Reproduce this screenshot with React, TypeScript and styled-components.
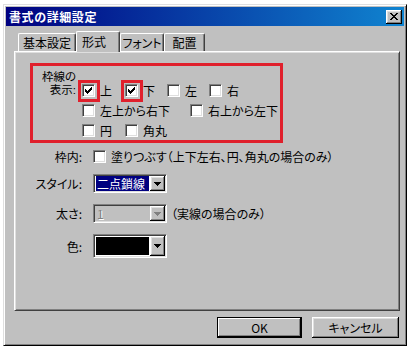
import React from "react";
import styled, { createGlobalStyle, css } from "styled-components";

const FACE = "#c0c0c0";
const RED = "#e0202c";

const GlobalStyle = createGlobalStyle`
  html, body { margin: 0; padding: 0; background: #fff; }
  body {
    font-family: "Noto Sans CJK JP", "Noto Sans", sans-serif;
    font-size: 12px;
    font-feature-settings: "palt";
    color: #000;
  }
  * { box-sizing: border-box; }
`;

const raised = css`
  box-shadow: inset -1px -1px #000, inset 1px 1px #fff, inset -2px -2px #808080,
    inset 2px 2px #dfdfdf;
`;

const sunken = css`
  border: 1px solid;
  border-color: #808080 #fff #fff #808080;
  box-shadow: inset 1px 1px #404040, inset -1px -1px #dfdfdf;
`;

const Page = styled.div`
  padding: 4px 0 0 3px;
`;

const Window = styled.div`
  width: 404px;
  height: 342px;
  background: ${FACE};
  border: 1px solid;
  border-color: #dfdfdf #000 #000 #dfdfdf;
  box-shadow: inset 1px 1px #fff, inset -1px -1px #808080;
  padding: 2px;
  display: flex;
  flex-direction: column;
`;

const TitleBar = styled.div`
  height: 19px;
  background: linear-gradient(to right, #000080, #1084d0);
  display: flex;
  align-items: center;
  justify-content: space-between;
  padding: 0 2px 0 3px;
`;

const TitleText = styled.span`
  color: #fff;
  font-weight: bold;
  font-size: 12px;
  letter-spacing: 0.6px;
  line-height: 19px;
`;

const CloseButton = styled.div`
  width: 16px;
  height: 14px;
  background: ${FACE};
  ${raised};
  display: flex;
  align-items: center;
  justify-content: center;
`;

const TabStrip = styled.div`
  margin-top: 5px;
  height: 20px;
  padding-left: 12px;
  display: flex;
  align-items: flex-end;
`;

const Tab = styled.div<{ $active?: boolean; $w: number }>`
  position: relative;
  z-index: ${(p) => (p.$active ? 2 : 0)};
  width: ${(p) => p.$w}px;
  height: ${(p) => (p.$active ? 21 : 18)}px;
  margin-bottom: ${(p) => (p.$active ? -1 : 0)}px;
  background: ${FACE};
  border-top: 1px solid #fff;
  border-left: 1px solid #fff;
  border-right: 1px solid #404040;
  border-top-left-radius: 2px;
  border-top-right-radius: 2px;
  box-shadow: inset -1px 0 #808080;
  display: flex;
  align-items: center;
  justify-content: ${(p) => (p.$active ? "flex-start" : "center")};
  padding-left: ${(p) => (p.$active ? 5 : 0)}px;
  padding-bottom: ${(p) => (p.$active ? 2 : 0)}px;
  font-size: 12px;
  white-space: nowrap;
`;

const Panel = styled.div`
  margin-left: 8px;
  width: 386px;
  height: 260px;
  border: 1px solid;
  border-color: #fff #404040 #404040 #fff;
  box-shadow: inset 1px 1px #dfdfdf, inset -1px -1px #808080;
  padding: 1px;
  display: flex;
  flex-direction: column;
`;

const BorderGroup = styled.div`
  margin: 10px 0 0 14px;
  width: 253px;
  height: 80px;
  border: 3px solid ${RED};
  padding: 5px 0 0 7px;
  display: flex;
`;

const GroupLabel = styled.div`
  width: 36px;
  white-space: nowrap;
  display: flex;
  flex-direction: column;
  align-items: flex-end;
`;

const GroupLabelLine = styled.span`
  display: block;
  height: 13px;
  line-height: 13px;
  font-family: "Liberation Sans", "Noto Sans CJK JP", sans-serif;
  font-size: 11.5px;
`;

const OptionRows = styled.div`
  margin-left: 6px;
  padding-top: 9px;
  display: flex;
  flex-direction: column;
`;

const OptionRow = styled.div`
  height: 20px;
  display: flex;
  align-items: center;
`;

const Option = styled.label<{ $w?: number }>`
  display: inline-flex;
  align-items: center;
  gap: 5px;
  width: ${(p) => (p.$w ? `${p.$w}px` : "auto")};
  white-space: nowrap;
  line-height: 13px;
`;

const CheckBox = styled.span<{ $marked?: boolean }>`
  position: relative;
  flex: none;
  width: 13px;
  height: 13px;
  background: #fff;
  ${sunken};
  display: flex;
  align-items: center;
  justify-content: center;
  ${(p) =>
    p.$marked &&
    css`
      &::after {
        content: "";
        position: absolute;
        left: -5px;
        top: -5px;
        width: 22px;
        height: 22px;
        border: 3px solid ${RED};
        box-sizing: border-box;
      }
    `}
`;

const Fields = styled.div`
  margin-top: 7px;
  display: grid;
  grid-template-columns: 66px auto;
  column-gap: 11px;
  row-gap: 11px;
  align-items: center;
  justify-items: start;
`;

const FieldLabel = styled.div`
  justify-self: end;
  white-space: nowrap;
  line-height: 13px;
`;

const FieldLine = styled.div`
  display: flex;
  align-items: center;
  gap: 4px;
  white-space: nowrap;
`;

const Combo = styled.div<{ $h: number; $disabled?: boolean }>`
  width: 74px;
  height: ${(p) => p.$h}px;
  background: ${(p) => (p.$disabled ? FACE : "#fff")};
  ${sunken};
  padding: 1px;
  display: flex;
`;

const ComboValue = styled.div<{ $kind: "selected" | "disabled" | "swatch" }>`
  flex: 1;
  margin: 0 1px 0 0;
  display: flex;
  align-items: center;
  padding-left: 2px;
  line-height: 13px;
  ${(p) =>
    p.$kind === "selected" &&
    css`
      background: #000080;
      color: #fff;
      margin: 0 1px 0 1px;
      padding-left: 1px;
    `}
  ${(p) =>
    p.$kind === "disabled" &&
    css`
      color: #808080;
      text-shadow: 1px 1px #fff;
    `}
  ${(p) =>
    p.$kind === "swatch" &&
    css`
      background: #000;
      margin: 1px 1px 1px 1px;
    `}
`;

const DropButton = styled.div`
  width: 15px;
  background: ${FACE};
  ${raised};
  display: flex;
  align-items: center;
  justify-content: center;
`;

const ButtonRow = styled.div`
  margin-top: 6px;
  display: flex;
  justify-content: flex-end;
  gap: 10px;
  padding-right: 5px;
`;

const PushButton = styled.div<{ $default?: boolean; $w: number }>`
  width: ${(p) => p.$w}px;
  height: 21px;
  background: ${FACE};
  display: flex;
  align-items: center;
  justify-content: center;
  font-size: 12px;
  ${(p) =>
    p.$default
      ? css`
          border: 1px solid #000;
          box-shadow: inset -1px -1px #000, inset 1px 1px #fff,
            inset -2px -2px #808080;
        `
      : css`
          box-shadow: inset -1px -1px #000, inset 1px 1px #fff,
            inset -2px -2px #808080, inset 2px 2px #dfdfdf;
        `}
`;

const CheckMark = () => (
  <svg width="7" height="7" viewBox="0 0 7 7" shapeRendering="crispEdges">
    <g fill="#000">
      <rect x="6" y="0" width="1" height="1" />
      <rect x="5" y="1" width="2" height="1" />
      <rect x="0" y="2" width="1" height="1" />
      <rect x="4" y="2" width="3" height="1" />
      <rect x="0" y="3" width="2" height="1" />
      <rect x="3" y="3" width="3" height="1" />
      <rect x="0" y="4" width="5" height="1" />
      <rect x="1" y="5" width="3" height="1" />
      <rect x="2" y="6" width="1" height="1" />
    </g>
  </svg>
);

const Arrow = ({ color = "#000" }: { color?: string }) => (
  <svg width="7" height="4" viewBox="0 0 7 4" shapeRendering="crispEdges">
    <g fill={color}>
      <rect x="0" y="0" width="7" height="1" />
      <rect x="1" y="1" width="5" height="1" />
      <rect x="2" y="2" width="3" height="1" />
      <rect x="3" y="3" width="1" height="1" />
    </g>
  </svg>
);

const CloseGlyph = () => (
  <svg width="8" height="7" viewBox="0 0 8 7" shapeRendering="crispEdges">
    <path
      d="M0 0h2v1h1v1h2V1h1V0h2v1H7v1H6v1H5v1h1v1h1v1h1v1H6V6H5V5H3v1H2v1H0V6h1V5h1V4h1V3H2V2H1V1H0z"
      fill="#000"
    />
  </svg>
);

type Opt = { label: string; checked?: boolean; w?: number };

const rows: Opt[][] = [
  [
    { label: "上", checked: true, w: 43 },
    { label: "下", checked: true, w: 42 },
    { label: "左", w: 42 },
    { label: "右" },
  ],
  [{ label: "左上から右下", w: 108 }, { label: "右上から左下" }],
  [{ label: "円", w: 43 }, { label: "角丸" }],
];

export default function App() {
  return (
    <>
      <GlobalStyle />
      <Page>
        <Window>
          <TitleBar>
            <TitleText>書式の詳細設定</TitleText>
            <CloseButton>
              <CloseGlyph />
            </CloseButton>
          </TitleBar>
          <TabStrip>
            <Tab $w={58}>基本設定</Tab>
            <Tab $w={44} $active>
              形式
            </Tab>
            <Tab $w={44}>フォント</Tab>
            <Tab $w={41}>配置</Tab>
          </TabStrip>
          <Panel>
            <BorderGroup>
              <GroupLabel>
                <GroupLabelLine>枠線の</GroupLabelLine>
                <GroupLabelLine>表示:</GroupLabelLine>
              </GroupLabel>
              <OptionRows>
                {rows.map((row, i) => (
                  <OptionRow key={i}>
                    {row.map((o) => (
                      <Option key={o.label} $w={o.w}>
                        <CheckBox $marked={o.checked}>
                          {o.checked && <CheckMark />}
                        </CheckBox>
                        {o.label}
                      </Option>
                    ))}
                  </OptionRow>
                ))}
              </OptionRows>
            </BorderGroup>
            <Fields>
              <FieldLabel>枠内:</FieldLabel>
              <Option>
                <CheckBox />
                塗りつぶす（上下左右、円、角丸の場合のみ）
              </Option>

              <FieldLabel>スタイル:</FieldLabel>
              <Combo $h={19}>
                <ComboValue $kind="selected">二点鎖線</ComboValue>
                <DropButton>
                  <Arrow />
                </DropButton>
              </Combo>

              <FieldLabel>太さ:</FieldLabel>
              <FieldLine>
                <Combo $h={19} $disabled>
                  <ComboValue $kind="disabled">1</ComboValue>
                  <DropButton>
                    <Arrow color="#808080" />
                  </DropButton>
                </Combo>
                （実線の場合のみ）
              </FieldLine>

              <FieldLabel>色:</FieldLabel>
              <Combo $h={24}>
                <ComboValue $kind="swatch" />
                <DropButton>
                  <Arrow />
                </DropButton>
              </Combo>
            </Fields>
          </Panel>
          <ButtonRow>
            <PushButton $default $w={85}>
              OK
            </PushButton>
            <PushButton $w={87}>キャンセル</PushButton>
          </ButtonRow>
        </Window>
      </Page>
    </>
  );
}
